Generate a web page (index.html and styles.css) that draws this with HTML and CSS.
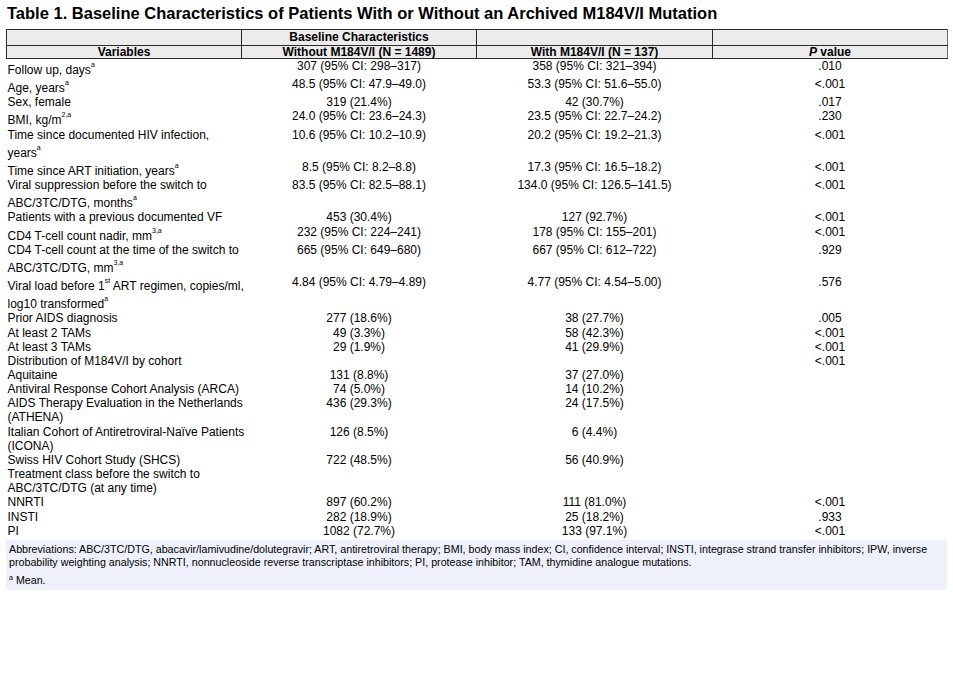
FILE: index.html
```html
<!DOCTYPE html>
<html lang="en">
<head>
<meta charset="utf-8">
<title>Table 1</title>
<link rel="stylesheet" href="styles.css">
</head>
<body>
<div class="page">
  <h1 class="title">Table 1. Baseline Characteristics of Patients With or Without an Archived M184V/I Mutation</h1>
  <table class="tbl">
    <colgroup>
      <col class="c1"><col class="c2"><col class="c3"><col class="c4">
    </colgroup>
    <thead>
      <tr class="h1row">
        <th></th>
        <th>Baseline Characteristics</th>
        <th></th>
        <th class="last"></th>
      </tr>
      <tr class="h2row">
        <th>Variables</th>
        <th>Without M184V/I (N = 1489)</th>
        <th>With M184V/I (N = 137)</th>
        <th class="last"><i>P</i> value</th>
      </tr>
    </thead>
    <tbody>
      <tr><td>Follow up, days<sup>a</sup></td><td>307 (95% CI: 298–317)</td><td>358 (95% CI: 321–394)</td><td>.010</td></tr>
      <tr><td>Age, years<sup>a</sup></td><td>48.5 (95% CI: 47.9–49.0)</td><td>53.3 (95% CI: 51.6–55.0)</td><td>&lt;.001</td></tr>
      <tr><td>Sex, female</td><td>319 (21.4%)</td><td>42 (30.7%)</td><td>.017</td></tr>
      <tr><td>BMI, kg/m<sup>2,a</sup></td><td>24.0 (95% CI: 23.6–24.3)</td><td>23.5 (95% CI: 22.7–24.2)</td><td>.230</td></tr>
      <tr><td>Time since documented HIV infection,<br>years<sup>a</sup></td><td>10.6 (95% CI: 10.2–10.9)</td><td>20.2 (95% CI: 19.2–21.3)</td><td>&lt;.001</td></tr>
      <tr><td>Time since ART initiation, years<sup>a</sup></td><td>8.5 (95% CI: 8.2–8.8)</td><td>17.3 (95% CI: 16.5–18.2)</td><td>&lt;.001</td></tr>
      <tr><td>Viral suppression before the switch to<br>ABC/3TC/DTG, months<sup>a</sup></td><td>83.5 (95% CI: 82.5–88.1)</td><td>134.0 (95% CI: 126.5–141.5)</td><td>&lt;.001</td></tr>
      <tr><td>Patients with a previous documented VF</td><td>453 (30.4%)</td><td>127 (92.7%)</td><td>&lt;.001</td></tr>
      <tr><td>CD4 T-cell count nadir, mm<sup>3,a</sup></td><td>232 (95% CI: 224–241)</td><td>178 (95% CI: 155–201)</td><td>&lt;.001</td></tr>
      <tr><td>CD4 T-cell count at the time of the switch to<br>ABC/3TC/DTG, mm<sup>3,a</sup></td><td>665 (95% CI: 649–680)</td><td>667 (95% CI: 612–722)</td><td>.929</td></tr>
      <tr><td>Viral load before 1<sup>st</sup> ART regimen, copies/ml,<br>log10 transformed<sup>a</sup></td><td>4.84 (95% CI: 4.79–4.89)</td><td>4.77 (95% CI: 4.54–5.00)</td><td>.576</td></tr>
      <tr><td>Prior AIDS diagnosis</td><td>277 (18.6%)</td><td>38 (27.7%)</td><td>.005</td></tr>
      <tr><td>At least 2 TAMs</td><td>49 (3.3%)</td><td>58 (42.3%)</td><td>&lt;.001</td></tr>
      <tr><td>At least 3 TAMs</td><td>29 (1.9%)</td><td>41 (29.9%)</td><td>&lt;.001</td></tr>
      <tr><td>Distribution of M184V/I by cohort</td><td></td><td></td><td>&lt;.001</td></tr>
      <tr><td>Aquitaine</td><td>131 (8.8%)</td><td>37 (27.0%)</td><td></td></tr>
      <tr><td>Antiviral Response Cohort Analysis (ARCA)</td><td>74 (5.0%)</td><td>14 (10.2%)</td><td></td></tr>
      <tr><td>AIDS Therapy Evaluation in the Netherlands<br>(ATHENA)</td><td>436 (29.3%)</td><td>24 (17.5%)</td><td></td></tr>
      <tr><td>Italian Cohort of Antiretroviral-Naïve Patients<br>(ICONA)</td><td>126 (8.5%)</td><td>6 (4.4%)</td><td></td></tr>
      <tr><td>Swiss HIV Cohort Study (SHCS)</td><td>722 (48.5%)</td><td>56 (40.9%)</td><td></td></tr>
      <tr><td>Treatment class before the switch to<br>ABC/3TC/DTG (at any time)</td><td></td><td></td><td></td></tr>
      <tr><td>NNRTI</td><td>897 (60.2%)</td><td>111 (81.0%)</td><td>&lt;.001</td></tr>
      <tr><td>INSTI</td><td>282 (18.9%)</td><td>25 (18.2%)</td><td>.933</td></tr>
      <tr><td>PI</td><td>1082 (72.7%)</td><td>133 (97.1%)</td><td>&lt;.001</td></tr>
    </tbody>
  </table>
  <div class="notes">
    <p class="abbr">Abbreviations: ABC/3TC/DTG, abacavir/lamivudine/dolutegravir; ART, antiretroviral therapy; BMI, body mass index; CI, confidence interval; INSTI, integrase strand transfer inhibitors; IPW, inverse<br>probability weighting analysis; NNRTI, nonnucleoside reverse transcriptase inhibitors; PI, protease inhibitor; TAM, thymidine analogue mutations.</p>
    <p class="mean"><sup>a</sup> Mean.</p>
  </div>
</div>
</body>
</html>
```

FILE: styles.css
```css
html, body {
  margin: 0;
  padding: 0;
  background: #ffffff;
}

.page {
  padding: 4px 6px 0 6px;
  font-family: "Liberation Sans", Arial, sans-serif;
  color: #000000;
}

.title {
  margin: 0 0 6px 1px;
  font-size: 16.5px;
  font-weight: bold;
  line-height: 19px;
}

.tbl {
  width: 941px;
  border-collapse: collapse;
  table-layout: fixed;
  font-size: 12px;
}

.c1, .c2 { width: 235px; }
.c3 { width: 236px; }
.c4 { width: 235px; }

.tbl th {
  background: #ececec;
  font-size: 12px;
  font-weight: bold;
  text-align: center;
  padding: 0;
  border: 1px solid #2b2b2b;
  white-space: nowrap;
}

.tbl th.last {
  border-right-color: #6a6a6a;
}

.h1row th { height: 15px; line-height: 15px; }
.h2row th { height: 12px; line-height: 12px; }

.tbl td {
  padding: 0 1px;
  vertical-align: top;
  text-align: center;
  line-height: 14.15px;
}

.tbl td:first-child {
  text-align: left;
  white-space: nowrap;
}

.tbl sup {
  font-size: 7px;
  line-height: 11px;
  vertical-align: 7px;
}

.notes {
  width: 935px;
  margin-top: 2px;
  background: #eef0fb;
  padding: 3px 3px 3px 3px;
  font-size: 10.7px;
  line-height: 13px;
}

.notes p {
  margin: 0;
}

.notes .mean {
  margin-top: 5px;
}

.notes sup {
  font-size: 7px;
  line-height: 0;
  vertical-align: 4px;
}
```
